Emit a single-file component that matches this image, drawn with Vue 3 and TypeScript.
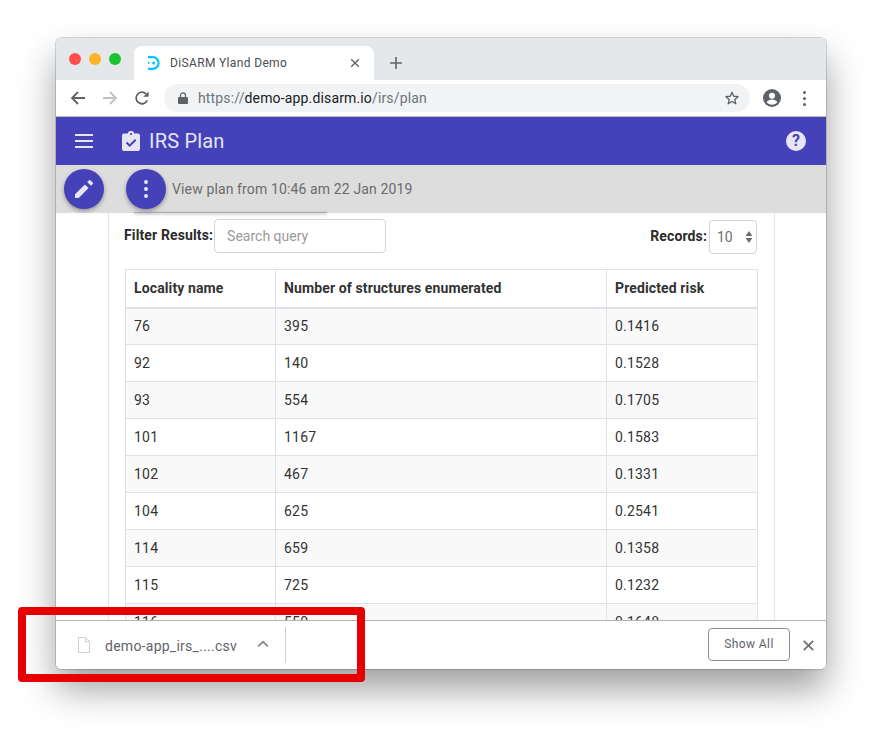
<template>
  <div class="page">
    <div class="window">
      <div class="tabstrip">
        <div class="lights">
          <span class="light red"></span>
          <span class="light amber"></span>
          <span class="light green"></span>
        </div>
        <div class="tab">
          <svg class="favicon" width="12" height="14" viewBox="0 0 12 14" fill="none">
            <path d="M0 1.2h4.8a5 5 0 0 1 0 11.6H0" stroke="#08c4fa" stroke-width="2.2" />
            <path d="M0 6.8h1.6" stroke="#08c4fa" stroke-width="2" />
            <circle cx="5.6" cy="7" r="1.5" fill="#08c4fa" />
          </svg>
          <span class="tab-title">DiSARM Yland Demo</span>
          <svg class="tab-close" width="10" height="10" viewBox="0 0 10 10">
            <path d="M1.2 1.2l7.6 7.6M8.8 1.2l-7.6 7.6" stroke="#5f6368" stroke-width="1.4" />
          </svg>
        </div>
        <svg class="new-tab" width="14" height="14" viewBox="0 0 14 14">
          <path d="M7 1v12M1 7h12" stroke="#5f6368" stroke-width="1.6" />
        </svg>
      </div>

      <div class="toolbar">
        <svg class="nav" width="16" height="16" viewBox="0 0 16 16" fill="none">
          <path d="M15 8H2M8 2L2 8l6 6" stroke="#5f6368" stroke-width="1.8" />
        </svg>
        <svg class="nav" width="16" height="16" viewBox="0 0 16 16" fill="none">
          <path d="M1 8h13M8 2l6 6-6 6" stroke="#bdc1c6" stroke-width="1.8" />
        </svg>
        <svg class="nav" width="16" height="16" viewBox="0 0 16 16" fill="none">
          <path d="M13.2 10.4A5.8 5.8 0 1 1 12.2 4" stroke="#5f6368" stroke-width="1.8" />
          <path d="M14.6 1.4v5.4H9.2z" fill="#5f6368" />
        </svg>
        <div class="omnibox">
          <svg width="10" height="12" viewBox="0 0 10 12" class="lock">
            <path d="M1 5h8a1 1 0 0 1 1 1v5a1 1 0 0 1-1 1H1a1 1 0 0 1-1-1V6a1 1 0 0 1 1-1z" fill="#5f6368" />
            <path d="M2.5 5V3.4a2.5 2.5 0 0 1 5 0V5" stroke="#5f6368" stroke-width="1.2" fill="none" />
          </svg>
          <span class="url"><span class="url-dim">https://</span>demo-app.disarm.io<span class="url-dim">/irs/plan</span></span>
          <svg class="star" width="16" height="16" viewBox="0 0 24 24" fill="none">
            <path d="M12 3.4l2.6 6 6.5.6-4.9 4.3 1.5 6.4L12 17.3l-5.7 3.4 1.5-6.4-4.9-4.3 6.5-.6z" stroke="#5f6368" stroke-width="2" stroke-linejoin="round" />
          </svg>
        </div>
        <svg class="avatar" width="18" height="18" viewBox="0 0 18 18">
          <circle cx="9" cy="9" r="9" fill="#5f6368" />
          <circle cx="9" cy="6.8" r="3" fill="#fff" />
          <path d="M3.6 13.2c1-2 3.4-2.8 5.4-2.8s4.4.8 5.4 2.8a6.8 6.8 0 0 1-10.8 0z" fill="#fff" />
        </svg>
        <div class="chrome-dots"><i></i><i></i><i></i></div>
      </div>

      <div class="appbar">
        <div class="burger"><i></i><i></i><i></i></div>
        <svg class="clipboard" width="18" height="20" viewBox="0 0 18 20">
          <path d="M2 2.5h3.6a3.5 3.5 0 0 1 6.8 0H16a2 2 0 0 1 2 2V18a2 2 0 0 1-2 2H2a2 2 0 0 1-2-2V4.5a2 2 0 0 1 2-2z" fill="#e6e5f5" />
          <circle cx="9" cy="3" r="1.1" fill="#4542b9" />
          <path d="M4.5 11.5l3.2 3.2 6-6" stroke="#4542b9" stroke-width="2" fill="none" />
        </svg>
        <span class="app-title">IRS Plan</span>
        <span class="help">?</span>
      </div>

      <div class="content">
        <div class="planbar">
          <button class="fab">
            <svg width="18" height="18" viewBox="0 0 18 18">
              <path d="M0 14.3V18h3.7L13.6 8.1 9.9 4.4zM17.7 4a1 1 0 0 0 0-1.4L15.4.3a1 1 0 0 0-1.4 0l-1.8 1.8 3.7 3.7z" fill="#e6e5f5" />
            </svg>
          </button>
          <button class="fab fab-more"><i></i><i></i><i></i></button>
          <span class="plan-note">View plan from 10:46 am 22 Jan 2019</span>
          <div class="menu-edge"></div>
        </div>

        <div class="card">
          <div class="filters">
            <label class="filter-label">Filter Results:</label>
            <div class="search">Search query</div>
            <label class="filter-label records">Records:</label>
            <div class="select">
              <span>10</span>
              <svg width="8" height="14" viewBox="0 0 8 14">
                <path d="M4 1l3.4 5H.6zM4 13L.6 8h6.8z" fill="#6e6e6e" />
              </svg>
            </div>
          </div>
          <table>
            <thead>
              <tr>
                <th class="col-a">Locality name</th>
                <th class="col-b">Number of structures enumerated</th>
                <th>Predicted risk</th>
              </tr>
            </thead>
            <tbody>
              <tr v-for="row in rows" :key="row[0]">
                <td>{{ row[0] }}</td>
                <td>{{ row[1] }}</td>
                <td>{{ row[2] }}</td>
              </tr>
            </tbody>
          </table>
        </div>
      </div>

      <div class="downloads">
        <svg class="file" width="12" height="16" viewBox="0 0 12 16" fill="none">
          <path d="M.5.5h7l4 4v11H.5z" fill="#fff" stroke="#cfcfcf" />
          <path d="M7.5.5v4h4" stroke="#cfcfcf" />
        </svg>
        <span class="file-name">demo-app_irs_....csv</span>
        <svg class="caret" width="12" height="8" viewBox="0 0 12 8" fill="none">
          <path d="M1.2 6.4L6 1.8l4.8 4.6" stroke="#8a8a8a" stroke-width="1.8" />
        </svg>
        <span class="divider"></span>
        <button class="show-all">Show All</button>
        <svg class="dl-close" width="11" height="11" viewBox="0 0 11 11">
          <path d="M.8.8l9.4 9.4M10.2.8L.8 10.2" stroke="#6b6f73" stroke-width="1.7" />
        </svg>
      </div>
    </div>
    <div class="highlight"></div>
  </div>
</template>

<script setup lang="ts">
const rows: [string, string, string][] = [
  ['76', '395', '0.1416'],
  ['92', '140', '0.1528'],
  ['93', '554', '0.1705'],
  ['101', '1167', '0.1583'],
  ['102', '467', '0.1331'],
  ['104', '625', '0.2541'],
  ['114', '659', '0.1358'],
  ['115', '725', '0.1232'],
  ['116', '550', '0.1648'],
]
</script>

<style>
html,
body {
  margin: 0;
  background: #fff;
}
</style>

<style scoped>
.page {
  position: relative;
  width: 882px;
  height: 743px;
  padding: 38px 0 0 56px;
  box-sizing: border-box;
  overflow: hidden;
  font-family: Roboto, "Liberation Sans", sans-serif;
}

.window {
  width: 770px;
  height: 631px;
  display: flex;
  flex-direction: column;
  border-radius: 5px;
  overflow: hidden;
  background: #fff;
  box-shadow: 0 0 0 0.5px rgba(0, 0, 0, 0.3), 0 20px 36px rgba(0, 0, 0, 0.38);
}

.tabstrip {
  height: 42px;
  flex: none;
  display: flex;
  align-items: flex-end;
  background: #e5e8eb;
}

.lights {
  display: flex;
  gap: 8px;
  padding: 0 0 15px 13px;
  width: 65px;
  box-sizing: border-box;
  align-self: flex-end;
  margin-right: 13px;
}

.light {
  width: 12px;
  height: 12px;
  border-radius: 50%;
  flex: none;
}

.red { background: #fe4f4b; }
.amber { background: #fcb32a; }
.green { background: #19c332; }

.tab {
  width: 240px;
  height: 34px;
  display: flex;
  align-items: center;
  background: #fff;
  border-radius: 8px 8px 0 0;
  padding: 0 14px 0 14px;
  box-sizing: border-box;
}

.favicon {
  margin-right: 10px;
}

.tab-title {
  flex: 1;
  font-size: 12px;
  letter-spacing: 0.35px;
  color: #4a4d51;
}

.new-tab {
  margin: 0 0 10px 15px;
}

.toolbar {
  height: 37px;
  flex: none;
  display: flex;
  align-items: center;
  box-sizing: border-box;
  border-bottom: 1px solid #bdbdbd;
  padding: 0 20px 0 14px;
  background: #fff;
}

.nav {
  margin-right: 16px;
  flex: none;
}

.nav:nth-child(3) {
  margin-right: 14px;
}

.omnibox {
  flex: 1;
  height: 28px;
  display: flex;
  align-items: center;
  background: #f1f3f4;
  border-radius: 14px;
  padding: 0 10px 0 14px;
  margin-right: 13px;
}

.lock {
  margin-right: 10px;
}

.url {
  flex: 1;
  font-size: 14px;
  letter-spacing: 0.15px;
  color: #202124;
}

.url-dim {
  color: #70757a;
}

.avatar {
  margin-right: 22px;
  flex: none;
}

.chrome-dots {
  display: flex;
  flex-direction: column;
  gap: 3px;
}

.chrome-dots i {
  width: 3px;
  height: 3px;
  border-radius: 50%;
  background: #5f6368;
}

.appbar {
  height: 48px;
  flex: none;
  display: flex;
  align-items: center;
  background: #4542b9;
  padding: 0 20px 0 19px;
  color: #e6e5f5;
}

.burger {
  display: flex;
  flex-direction: column;
  gap: 4px;
  width: 18px;
  margin-right: 29px;
}

.burger i {
  height: 2px;
  background: #e6e5f5;
}

.clipboard {
  margin-right: 9px;
}

.app-title {
  flex: 1;
  font-size: 20px;
  letter-spacing: 0.2px;
}

.help {
  width: 20px;
  height: 20px;
  border-radius: 50%;
  background: #e6e5f5;
  color: #4542b9;
  font-size: 16px;
  font-weight: 700;
  line-height: 20px;
  text-align: center;
}

.content {
  flex: 1;
  min-height: 0;
  overflow: hidden;
  position: relative;
  background: #fff;
}

.planbar {
  position: relative;
  z-index: 1;
  height: 48px;
  display: flex;
  align-items: center;
  padding-left: 8px;
  background: #dddddd;
}

.fab {
  width: 40px;
  height: 40px;
  flex: none;
  padding: 0;
  border: 0;
  border-radius: 50%;
  background: #4542b9;
  display: flex;
  flex-direction: column;
  align-items: center;
  justify-content: center;
  box-shadow: 0 2px 4px rgba(0, 0, 0, 0.35);
}

.fab-more {
  margin-left: 22px;
  gap: 3px;
}

.fab-more i {
  width: 4px;
  height: 4px;
  border-radius: 50%;
  background: #e6e5f5;
}

.plan-note {
  margin-left: 6px;
  font-size: 14px;
  letter-spacing: 0.13px;
  color: #6b6b6b;
}

.menu-edge {
  position: absolute;
  left: 78px;
  top: 47px;
  width: 193px;
  height: 1px;
  background: rgba(0, 0, 0, 0.2);
  box-shadow: 0 1px 3px rgba(0, 0, 0, 0.45);
}

.card {
  width: 667px;
  margin-left: 52px;
  box-sizing: border-box;
  border-left: 1px solid #e4e4e4;
  border-right: 1px solid #e4e4e4;
  padding: 6px 17px 0 16px;
}

.filters {
  display: flex;
  align-items: flex-start;
  height: 50px;
  margin-left: -1px;
}

.filter-label {
  margin-top: 8px;
  font-size: 14px;
  font-weight: 700;
  letter-spacing: 0.13px;
  color: #2b2b2b;
}

.search {
  width: 172px;
  height: 34px;
  margin-left: 1px;
  box-sizing: border-box;
  border: 1px solid #ced4da;
  border-radius: 4px;
  padding-left: 12px;
  font-size: 14px;
  line-height: 32px;
  color: #9a9a9a;
}

.records {
  margin-left: auto;
  margin-top: 9px;
}

.select {
  width: 48px;
  height: 34px;
  margin-top: 1px;
  margin-left: 2px;
  box-sizing: border-box;
  display: flex;
  align-items: center;
  justify-content: space-between;
  border: 1px solid #ced4da;
  border-radius: 4px;
  padding: 0 3px 0 7px;
  font-size: 14px;
  color: #6b6f73;
}

table {
  width: 633px;
  table-layout: fixed;
  border-collapse: collapse;
  font-size: 14px;
  color: #333;
}

th,
td {
  height: 37px;
  padding: 0 8px;
  box-sizing: border-box;
  border: 1px solid #dee2e6;
  text-align: left;
  letter-spacing: 0.2px;
}

th {
  height: 38px;
  font-weight: 700;
  letter-spacing: 0.12px;
  border-bottom-width: 2px;
}

.col-a {
  width: 150px;
}

.col-b {
  width: 331px;
}

tbody tr:nth-child(odd) {
  background: #f9f9f9;
}

.downloads {
  height: 49px;
  flex: none;
  display: flex;
  align-items: center;
  box-sizing: border-box;
  border-top: 1px solid #b4b4b4;
  padding: 0 12px 0 22px;
  background: #fff;
}

.file {
  margin-right: 15px;
  flex: none;
}

.file-name {
  margin-top: 2px;
  font-size: 14px;
  letter-spacing: 0.26px;
  color: #5f6368;
}

.caret {
  margin-left: 20px;
  margin-bottom: 2px;
}

.divider {
  width: 1px;
  height: 36px;
  margin-left: 16px;
  background: #cfcfcf;
}

.show-all {
  width: 82px;
  height: 33px;
  margin-left: auto;
  margin-right: 13px;
  margin-bottom: 2px;
  padding: 0;
  border: 1px solid #8e8e8e;
  border-radius: 4px;
  background: #fff;
  font-family: inherit;
  font-size: 12px;
  letter-spacing: 0.4px;
  color: #5f6368;
}

.highlight {
  position: absolute;
  left: 18px;
  top: 607px;
  width: 347px;
  height: 75px;
  box-sizing: border-box;
  border: 8px solid #e60000;
  border-radius: 4px;
}
</style>
